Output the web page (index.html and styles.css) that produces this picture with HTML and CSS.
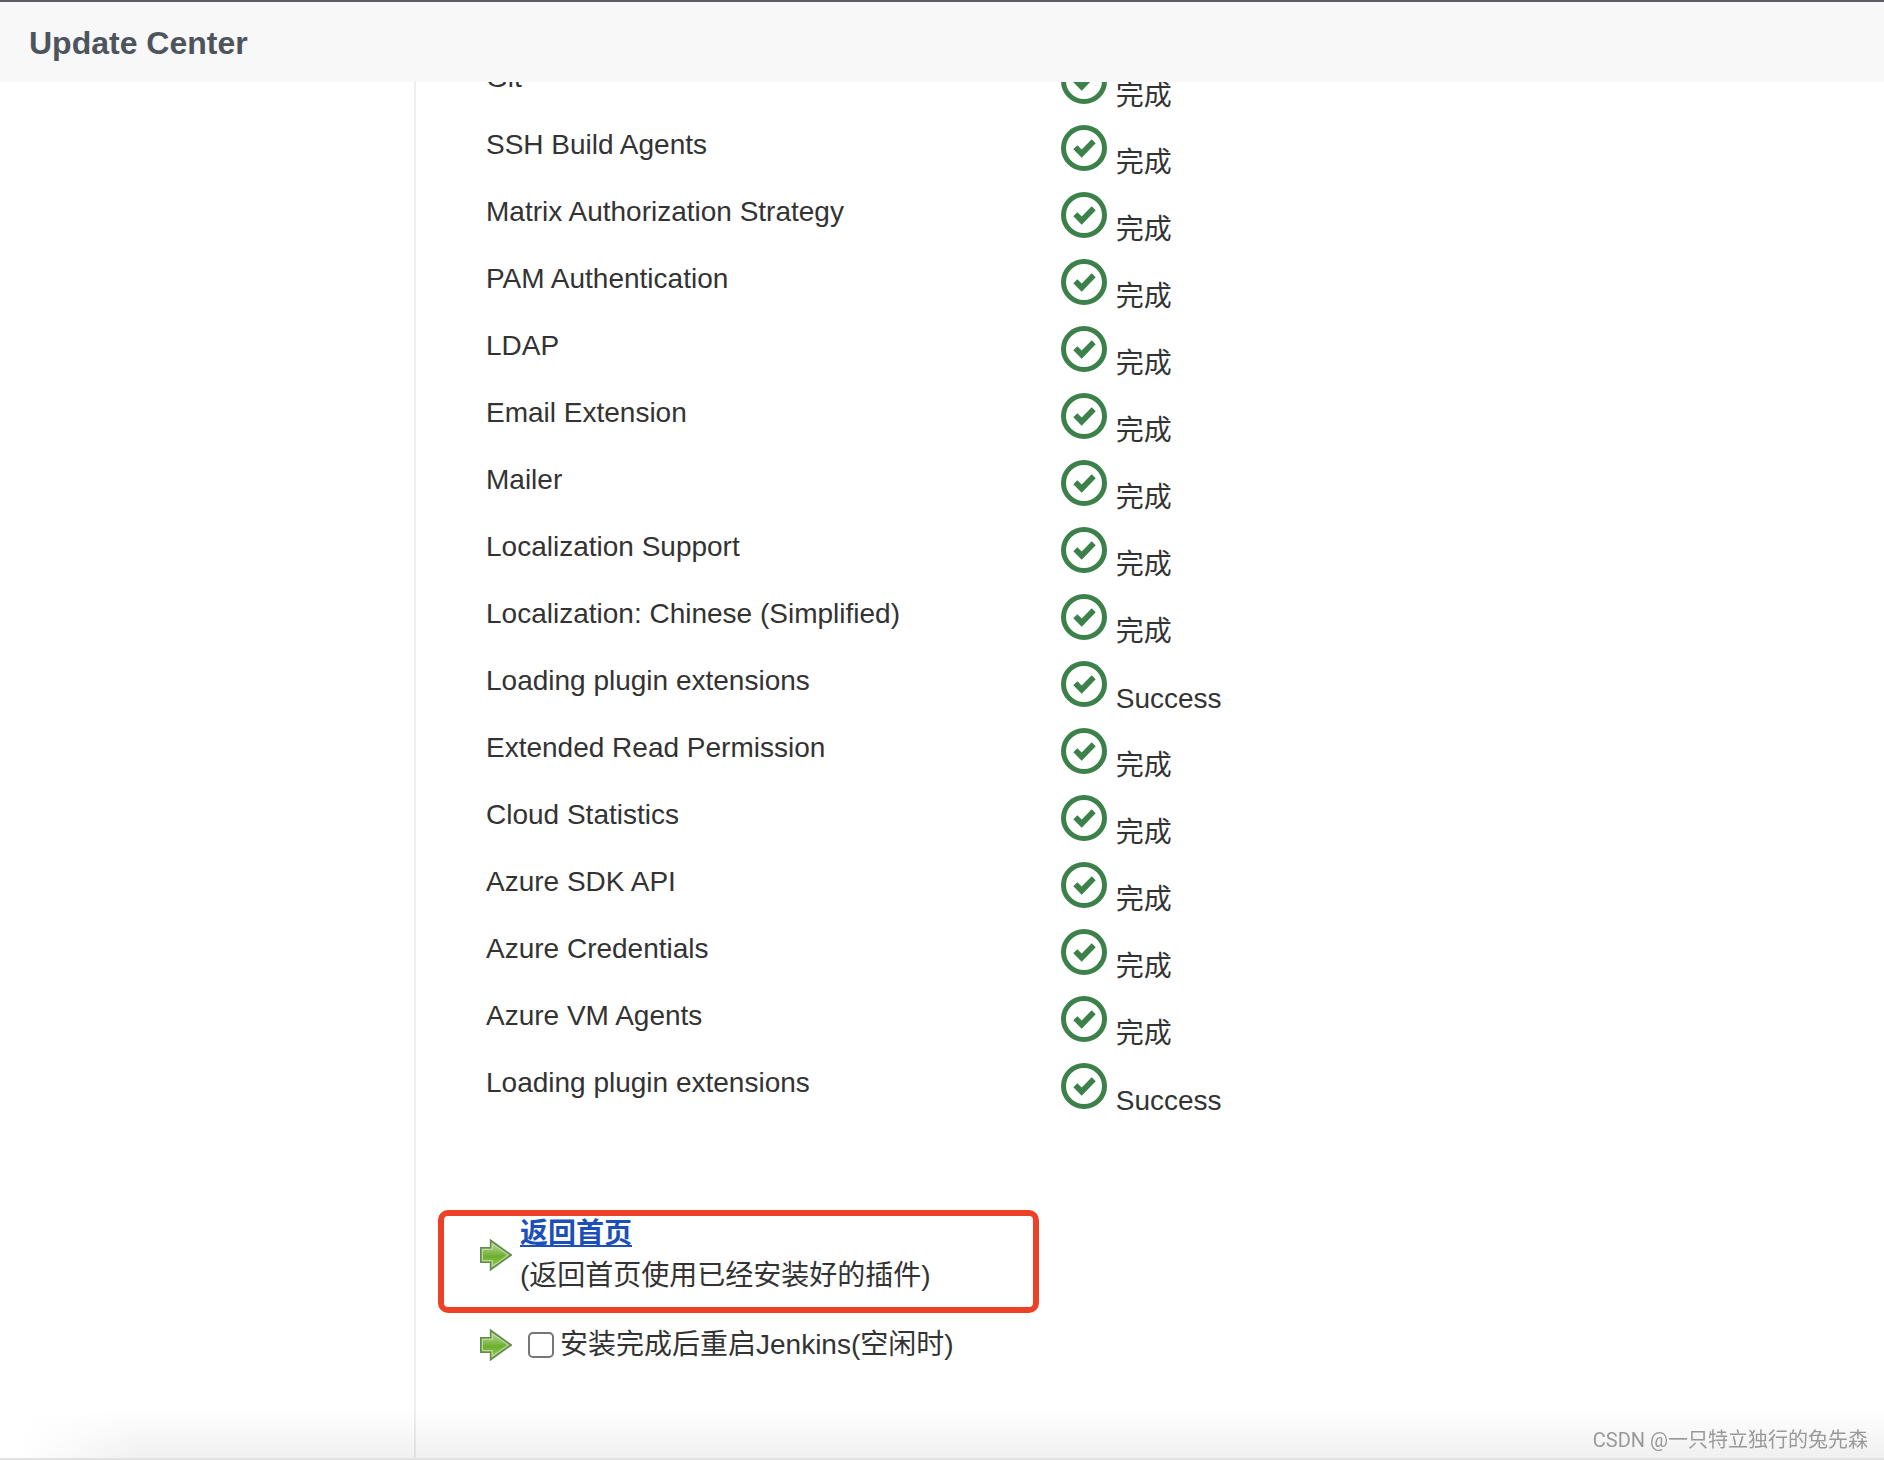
FILE: index.html
```html
<!DOCTYPE html>
<html lang="zh-CN">
<head>
<meta charset="utf-8">
<title>Update Center</title>
<link rel="stylesheet" href="styles.css">
</head>
<body>
<svg class="sprite" aria-hidden="true">
  <defs>
    <linearGradient id="leaf" x1="0" y1="0" x2="0" y2="1">
      <stop offset="0" stop-color="#c3dda4"/>
      <stop offset="0.45" stop-color="#7fb84a"/>
      <stop offset="0.55" stop-color="#6cb02c"/>
      <stop offset="1" stop-color="#9ad05c"/>
    </linearGradient>
  </defs>
  <symbol id="ok" viewBox="0 0 48 48">
    <circle cx="24" cy="24" r="20.5" fill="none" stroke="#3c814a" stroke-width="5"/>
    <path d="M13.3 25.3l4-4.1 4.4 4.2 10-10.1 4 4-14 14.4z" fill="#3c814a"/>
  </symbol>
  <symbol id="arrow" viewBox="0 0 32 32">
    <path d="M.9 8.9H10.7V1.4L31 16 10.7 30.6V23.1H.9z" fill="url(#leaf)" stroke="#648d4c" stroke-width="1.8"/>
    <path d="M2.4 10.4H12.2V4.6L28.2 16 12.2 27.4V21.6H2.4z" fill="none" stroke="#bcd99c" stroke-width="1.2"/>
  </symbol>
</svg>

<header class="page-header"><h1 class="page-title">Update Center</h1></header>

<div class="page-body">
  <aside class="side-panel"></aside>
  <main class="main-panel">
    <table class="jobs">
      <tbody>
        <tr><td class="job-name">Git</td><td class="job-status"><svg class="ok"><use href="#ok"/></svg> 完成</td></tr>
        <tr><td class="job-name">SSH Build Agents</td><td class="job-status"><svg class="ok"><use href="#ok"/></svg> 完成</td></tr>
        <tr><td class="job-name">Matrix Authorization Strategy</td><td class="job-status"><svg class="ok"><use href="#ok"/></svg> 完成</td></tr>
        <tr><td class="job-name">PAM Authentication</td><td class="job-status"><svg class="ok"><use href="#ok"/></svg> 完成</td></tr>
        <tr><td class="job-name">LDAP</td><td class="job-status"><svg class="ok"><use href="#ok"/></svg> 完成</td></tr>
        <tr><td class="job-name">Email Extension</td><td class="job-status"><svg class="ok"><use href="#ok"/></svg> 完成</td></tr>
        <tr><td class="job-name">Mailer</td><td class="job-status"><svg class="ok"><use href="#ok"/></svg> 完成</td></tr>
        <tr><td class="job-name">Localization Support</td><td class="job-status"><svg class="ok"><use href="#ok"/></svg> 完成</td></tr>
        <tr><td class="job-name">Localization: Chinese (Simplified)</td><td class="job-status"><svg class="ok"><use href="#ok"/></svg> 完成</td></tr>
        <tr><td class="job-name">Loading plugin extensions</td><td class="job-status"><svg class="ok"><use href="#ok"/></svg> Success</td></tr>
        <tr><td class="job-name">Extended Read Permission</td><td class="job-status"><svg class="ok"><use href="#ok"/></svg> 完成</td></tr>
        <tr><td class="job-name">Cloud Statistics</td><td class="job-status"><svg class="ok"><use href="#ok"/></svg> 完成</td></tr>
        <tr><td class="job-name">Azure SDK API</td><td class="job-status"><svg class="ok"><use href="#ok"/></svg> 完成</td></tr>
        <tr><td class="job-name">Azure Credentials</td><td class="job-status"><svg class="ok"><use href="#ok"/></svg> 完成</td></tr>
        <tr><td class="job-name">Azure VM Agents</td><td class="job-status"><svg class="ok"><use href="#ok"/></svg> 完成</td></tr>
        <tr><td class="job-name">Loading plugin extensions</td><td class="job-status"><svg class="ok"><use href="#ok"/></svg> Success</td></tr>
      </tbody>
    </table>

    <div class="actions">
      <div class="action action-marked">
        <svg class="arrow"><use href="#arrow"/></svg>
        <div><a class="home-link" href="#">返回首页</a><br>(返回首页使用已经安装好的插件)</div>
      </div>
      <div class="action">
        <svg class="arrow"><use href="#arrow"/></svg>
        <label class="restart"><input class="tick" type="checkbox">安装完成后重启Jenkins(空闲时)</label>
      </div>
    </div>
  </main>
</div>

<div class="bottom-shade"><span class="watermark">CSDN @一只特立独行的兔先森</span></div>
</body>
</html>
```
FILE: styles.css
```css
*,
*::after {
  box-sizing: border-box;
}

body {
  margin: 0;
  min-height: 100vh;
  display: flex;
  flex-direction: column;
  background: #fff;
  color: #333;
  font: 28px/42px "Liberation Sans", "Noto Sans CJK SC", sans-serif;
}

.sprite {
  position: absolute;
  width: 0;
  height: 0;
}

.page-header {
  position: sticky;
  top: 0;
  z-index: 1;
  padding: 21px 29px 19px;
  border-top: 2px solid #5f5d63;
  background: #f8f8f8;
}

.page-title {
  margin: 0;
  color: #4d545d;
  font-size: 32px;
  line-height: 40px;
}

.page-body {
  flex: 1;
  display: flex;
}

.side-panel {
  flex: 0 0 416px;
  border-right: 2px solid #eee;
}

/* the list is scrolled, its first row is partly under the header */
.main-panel {
  flex: 1;
  min-width: 0;
  margin-top: -29px;
  padding: 0 64px;
}

.jobs {
  border-collapse: collapse;
}

.jobs td {
  padding: 4px 6px 3px;
  vertical-align: top;
}

.job-name {
  width: 574px;
}

.ok {
  width: 48px;
  height: 48px;
  vertical-align: baseline;
}

.actions {
  display: flex;
  flex-direction: column;
  gap: 27px;
  padding-top: 88px;
}

.action {
  display: flex;
  align-items: center;
  gap: 8px;
}

.action-marked {
  position: relative;
}

.action-marked::after {
  content: "";
  position: absolute;
  top: -3px;
  left: -42px;
  width: 601px;
  height: 103px;
  border: 6px solid #ec4127;
  border-radius: 10px;
  pointer-events: none;
}

.arrow {
  flex: none;
  width: 32px;
  height: 32px;
}

.home-link {
  color: #1d4fb8;
  font-weight: 600;
  text-decoration: underline;
}

.restart {
  display: flex;
  align-items: center;
  gap: 6px;
}

.tick {
  appearance: none;
  width: 26px;
  height: 26px;
  margin: 0 0 0 8px;
  border: 2px solid #767676;
  border-radius: 5px;
  background: #fff;
}

.bottom-shade {
  position: fixed;
  right: 0;
  bottom: 0;
  left: 0;
  height: 50px;
  padding: 16px 16px 0 0;
  text-align: right;
  pointer-events: none;
  border-bottom: 2px solid #e2e2e2;
  background:
    linear-gradient(to right, #fff 20px, rgba(255, 255, 255, 0) 140px),
    linear-gradient(rgba(0, 0, 0, 0), rgba(0, 0, 0, 0.06));
}

.watermark {
  display: block;
  color: #999;
  font: 20px/28px Roboto, "Noto Sans CJK SC", sans-serif;
}
```
